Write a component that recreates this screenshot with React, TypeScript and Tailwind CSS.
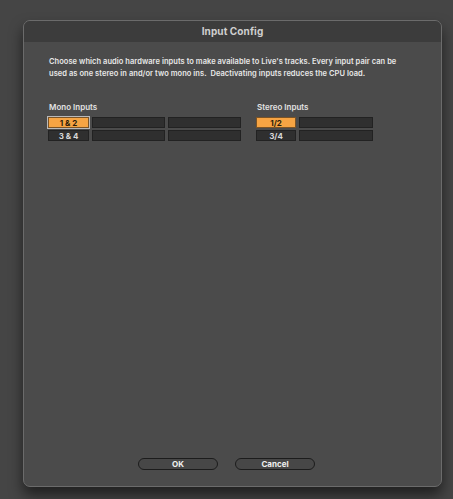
const font = { fontFamily: '"Inter", "Liberation Sans", Arial, sans-serif' };

function Cell({
  label,
  width,
  on,
  focus,
}: {
  label?: string;
  width: string;
  on?: boolean;
  focus?: boolean;
}) {
  return (
    <div
      className={[
        "h-[11px] flex items-center justify-center text-[8px] font-bold leading-none border",
        width,
        on
          ? "bg-[#f6a443] text-[#2a1c0a] border-[#7a5326]"
          : "bg-[#2f2f2f] text-[#d9d9d9] border-[#222222]",
        focus ? "outline outline-1 outline-[#b9b9b9]" : "",
      ].join(" ")}
    >
      {label}
    </div>
  );
}

export default function App() {
  return (
    <div
      className="w-[453px] h-[499px] bg-[#454545] overflow-hidden pt-[20px] pl-[23px]"
      style={font}
    >
      <div className="w-[419px] h-[467px] flex flex-col rounded-[7px] border border-[#6b6b6b] bg-[#4b4b4b] overflow-hidden shadow-[0_8px_14px_rgba(0,0,0,0.55)]">
        {/* title bar */}
        <div className="h-[21px] shrink-0 bg-[#3c3c3c] flex items-center justify-center">
          <span className="text-[10px] font-bold text-[#cfcfcf] tracking-[0.1px]">Input Config</span>
        </div>

        <div className="flex-1 flex flex-col pl-[24px] pr-[20px]">
          <p className="mt-[14px] pl-[1px] text-[7.5px] leading-[11.5px] font-semibold text-[#e8e8e8] tracking-[0.05px]">
            Choose which audio hardware inputs to make available to Live's tracks. Every input pair can be
            <br />
            used as one stereo in and/or two mono ins.&nbsp; Deactivating inputs reduces the CPU load.
          </p>

          <div className="mt-[23px] flex">
            <div className="w-[208px] flex flex-col">
              <span className="text-[8px] font-semibold text-[#e2e2e2] leading-[10px] mb-[5px] pl-[1px]">Mono Inputs</span>
              <div className="flex gap-[3px]">
                <Cell label="1 & 2" width="w-[41px]" on focus />
                <Cell width="w-[73px]" />
                <Cell width="w-[73px]" />
              </div>
              <div className="flex gap-[3px] mt-[2px]">
                <Cell label="3 & 4" width="w-[41px]" />
                <Cell width="w-[73px]" />
                <Cell width="w-[73px]" />
              </div>
            </div>
            <div className="flex flex-col">
              <span className="text-[8px] font-semibold text-[#e2e2e2] leading-[10px] mb-[5px] pl-[1px]">Stereo Inputs</span>
              <div className="flex gap-[3px]">
                <Cell label="1/2" width="w-[40px]" on />
                <Cell width="w-[74px]" />
              </div>
              <div className="flex gap-[3px] mt-[2px]">
                <Cell label="3/4" width="w-[40px]" />
                <Cell width="w-[74px]" />
              </div>
            </div>
          </div>

          <div className="mt-auto mb-[16px] flex justify-center gap-[17px] pr-[16px]">
            <button className="w-[80px] h-[12px] rounded-full border border-[#1c1c1c] bg-[#474747] text-[8px] font-bold text-[#f0f0f0] leading-none">
              OK
            </button>
            <button className="w-[80px] h-[12px] rounded-full border border-[#1c1c1c] bg-[#474747] text-[8px] font-bold text-[#f0f0f0] leading-none">
              Cancel
            </button>
          </div>
        </div>
      </div>
    </div>
  );
}
